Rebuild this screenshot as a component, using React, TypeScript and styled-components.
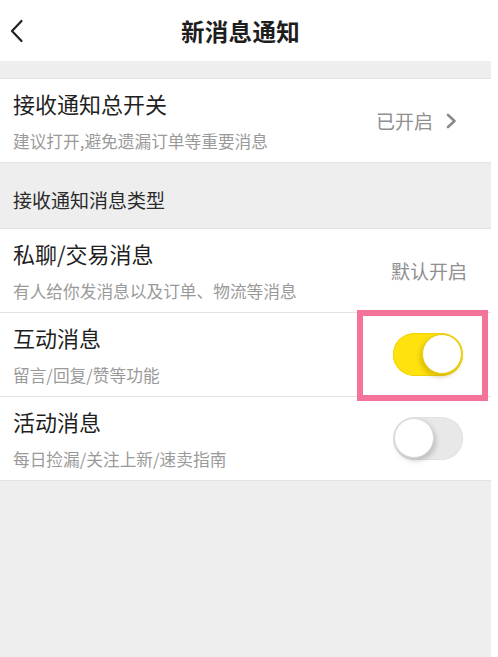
import React from "react";
import styled, { createGlobalStyle } from "styled-components";

const GlobalStyle = createGlobalStyle`
  html, body {
    margin: 0;
    padding: 0;
    background: #ffffff;
  }
  body {
    font-family: "Noto Sans CJK SC", "Noto Sans", sans-serif;
  }
`;

interface SettingItem {
  title: string;
  desc: string;
  kind: "link" | "text" | "switch";
  value?: string;
  on?: boolean;
  highlight?: boolean;
}

const typeItems: Array<SettingItem> = [
  {
    title: "私聊/交易消息",
    desc: "有人给你发消息以及订单、物流等消息",
    kind: "text",
    value: "默认开启",
  },
  {
    title: "互动消息",
    desc: "留言/回复/赞等功能",
    kind: "switch",
    on: true,
    highlight: true,
  },
  {
    title: "活动消息",
    desc: "每日捡漏/关注上新/速卖指南",
    kind: "switch",
    on: false,
  },
];

function BackIcon() {
  return (
    <svg width="14" height="24" viewBox="0 0 14 24">
      <path
        d="M11.5 2 L2 12 L11.5 22"
        fill="none"
        stroke="#222"
        strokeWidth="2.2"
        strokeLinecap="round"
        strokeLinejoin="round"
      />
    </svg>
  );
}

function ChevronRight() {
  return (
    <svg width="11" height="16" viewBox="0 0 11 16">
      <path
        d="M2 2 L8.5 8 L2 14"
        fill="none"
        stroke="#8a8a8a"
        strokeWidth="2.6"
        strokeLinecap="round"
        strokeLinejoin="round"
      />
    </svg>
  );
}

function renderRight(item: SettingItem) {
  if (item.kind === "switch") {
    return (
      <Switch $on={!!item.on}>
        <Knob $on={!!item.on} />
      </Switch>
    );
  }
  return <RightText>{item.value}</RightText>;
}

export default function App() {
  return (
    <Page>
      <GlobalStyle />
      <Header>
        <BackButton>
          <BackIcon />
        </BackButton>
        <HeaderTitle>新消息通知</HeaderTitle>
      </Header>
      <Gap />
      <List>
        <Row>
          <Info>
            <Title>接收通知总开关</Title>
            <Desc>建议打开,避免遗漏订单等重要消息</Desc>
          </Info>
          <LinkRight>
            <RightText>已开启</RightText>
            <ChevronRight />
          </LinkRight>
        </Row>
      </List>
      <SectionLabel>接收通知消息类型</SectionLabel>
      <List>
        {typeItems.map((item) => (
          <Row key={item.title}>
            <Info>
              <Title>{item.title}</Title>
              <Desc>{item.desc}</Desc>
            </Info>
            {renderRight(item)}
            {item.highlight && <HighlightBox />}
          </Row>
        ))}
      </List>
    </Page>
  );
}

const Page = styled.div`
  width: 491px;
  min-height: 657px;
  background: #eeeeee;
  display: flex;
  flex-direction: column;
`;

const Header = styled.header`
  height: 61px;
  background: #ffffff;
  display: flex;
  align-items: center;
  justify-content: center;
  position: relative;
`;

const BackButton = styled.div`
  position: absolute;
  left: 10px;
  top: 19px;
  display: flex;
`;

const HeaderTitle = styled.h1`
  margin: 0 0 0 -10px;
  font-size: 23.5px;
  font-weight: 700;
  color: #1e1e1e;
  letter-spacing: 0.3px;
`;

const Gap = styled.div`
  height: 17px;
`;

const List = styled.div`
  background: #ffffff;
  border-top: 1px solid #e3e3e3;
`;

const Row = styled.div`
  position: relative;
  height: 83px;
  box-sizing: content-box;
  border-bottom: 1px solid #e3e3e3;
  display: flex;
  align-items: center;
  padding: 0 24px 0 13px;
`;

const Info = styled.div`
  flex: 1;
  display: flex;
  flex-direction: column;
  align-self: stretch;
  padding-top: 11px;
`;

const Title = styled.div`
  font-size: 22px;
  line-height: 26px;
  color: #1f1f1f;
`;

const Desc = styled.div`
  margin-top: 14px;
  font-size: 16.7px;
  line-height: 22px;
  color: #9a9a9a;
`;

const LinkRight = styled.div`
  display: flex;
  align-items: center;
  gap: 13px;
  margin-right: 10px;
`;

const RightText = styled.span`
  font-size: 19px;
  color: #8f8f8f;
`;

const SectionLabel = styled.div`
  height: 65px;
  box-sizing: border-box;
  padding: 25px 13px 0;
  font-size: 19px;
  line-height: 24px;
  color: #2a2a2a;
`;

const Switch = styled.div<{ $on: boolean }>`
  position: relative;
  width: 70px;
  height: 43px;
  border-radius: 22px;
  margin-right: 4px;
  background: ${(p) => (p.$on ? "#ffe20e" : "#e8e8e8")};
  box-shadow: ${(p) =>
    p.$on ? "inset 0 0 0 1px #f0d20a" : "inset 0 0 0 1px #e2e2e2"};
`;

const Knob = styled.div<{ $on: boolean }>`
  position: absolute;
  top: 1px;
  left: ${(p) => (p.$on ? "29px" : "1px")};
  width: 40px;
  height: 40px;
  border-radius: 50%;
  background: #ffffff;
  box-sizing: border-box;
  border: 1px solid ${(p) => (p.$on ? "#e6cd10" : "#d8d8d8")};
  box-shadow: ${(p) =>
    p.$on ? "-2px 3px 5px rgba(150, 120, 0, 0.35)" : "2px 3px 5px rgba(0, 0, 0, 0.18)"};
`;

const HighlightBox = styled.div`
  position: absolute;
  top: -3px;
  right: 3px;
  width: 131px;
  height: 91px;
  box-sizing: border-box;
  border: 6px solid #f47399;
  pointer-events: none;
`;
